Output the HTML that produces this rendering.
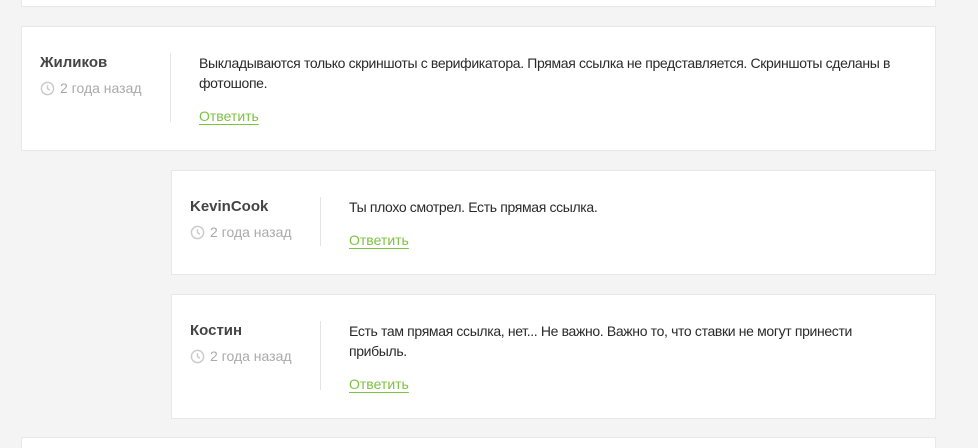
<!DOCTYPE html>
<html><head><meta charset="utf-8"><style>
html,body{margin:0;width:978px;height:448px;background:#f4f4f4;position:relative;overflow:hidden;font-family:"Liberation Sans",sans-serif;}
.card{position:absolute;background:#fff;border:1px solid #e8e8e8;box-sizing:border-box;}
.name{position:absolute;font-weight:bold;font-size:15px;color:#444;}
.time{position:absolute;font-size:14px;color:#aaa;}
.time svg{vertical-align:-3px;margin-right:5px}
.div{position:absolute;width:1px;background:#e4e4e4;}
.txt{position:absolute;font-size:14px;line-height:20px;color:#2a2a2a;letter-spacing:-0.35px;}
.rep{position:absolute;font-size:14px;color:#7dc242;text-decoration:underline;text-underline-offset:3px;}
</style></head><body>
<div class="card" style="left:21px;top:-10px;width:915px;height:17px"></div>
<div class="card" style="left:21px;top:26px;width:915px;height:125px"></div>
<div class="card" style="left:171px;top:170px;width:765px;height:105px"></div>
<div class="card" style="left:171px;top:294px;width:765px;height:125px"></div>
<div class="card" style="left:21px;top:437px;width:915px;height:30px"></div>

<div class="name" style="left:40px;top:54px">Жиликов</div>
<div class="time" style="left:40px;top:80px"><svg width="15" height="15" viewBox="0 0 16 16"><circle cx="8" cy="8" r="6.5" fill="none" stroke="#ccc" stroke-width="1.6"/><path d="M8 4.5V8l2.5 2" fill="none" stroke="#ccc" stroke-width="1.6"/></svg>2 года назад</div>
<div class="div" style="left:170px;top:53px;height:69px"></div>
<div class="txt" style="left:199px;top:53px;width:720px">Выкладываются только скриншоты с верификатора. Прямая ссылка не представляется. Скриншоты сделаны в фотошопе.</div>
<div class="rep" style="left:199px;top:108px">Ответить</div>

<div class="name" style="left:190px;top:198px">KevinCook</div>
<div class="time" style="left:190px;top:224px"><svg width="15" height="15" viewBox="0 0 16 16"><circle cx="8" cy="8" r="6.5" fill="none" stroke="#ccc" stroke-width="1.6"/><path d="M8 4.5V8l2.5 2" fill="none" stroke="#ccc" stroke-width="1.6"/></svg>2 года назад</div>
<div class="div" style="left:320px;top:197px;height:49px"></div>
<div class="txt" style="left:349px;top:197px">Ты плохо смотрел. Есть прямая ссылка.</div>
<div class="rep" style="left:349px;top:232px">Ответить</div>

<div class="name" style="left:190px;top:322px">Костин</div>
<div class="time" style="left:190px;top:348px"><svg width="15" height="15" viewBox="0 0 16 16"><circle cx="8" cy="8" r="6.5" fill="none" stroke="#ccc" stroke-width="1.6"/><path d="M8 4.5V8l2.5 2" fill="none" stroke="#ccc" stroke-width="1.6"/></svg>2 года назад</div>
<div class="div" style="left:320px;top:321px;height:69px"></div>
<div class="txt" style="left:349px;top:321px;width:520px">Есть там прямая ссылка, нет... Не важно. Важно то, что ставки не могут принести прибыль.</div>
<div class="rep" style="left:349px;top:376px">Ответить</div>
</body></html>
